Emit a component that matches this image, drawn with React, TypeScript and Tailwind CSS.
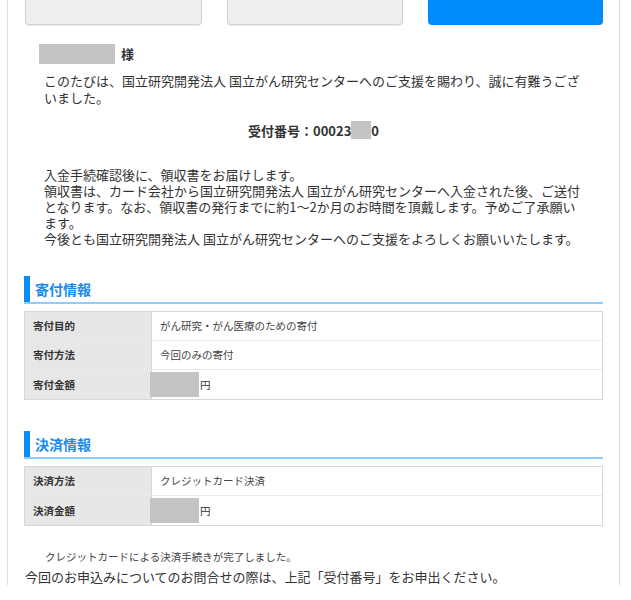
const font = { fontFamily: '"Noto Sans CJK JP", "Noto Sans", sans-serif' };

function StepGap() {
  return (
    <div className="flex w-[25px] justify-center">
      <svg width="6" height="8" viewBox="0 0 6 8" aria-hidden="true">
        <path d="M4 0 L2.5 6" stroke="#c8c8c8" strokeWidth="1.2" fill="none" />
      </svg>
    </div>
  );
}

function SectionHeading({ title }: { title: string }) {
  return (
    <div>
      <div className="flex h-[26px] items-center border-l-[6px] border-[#0a8cf5] pl-[5px]">
        <h2 className="text-[14px] font-bold leading-none text-[#1b8ceb]">{title}</h2>
      </div>
      <div className="h-[2px] bg-[#90cdfb]" />
    </div>
  );
}

function Row({
  label,
  value,
  amount,
  last,
}: {
  label: string;
  value?: string;
  amount?: boolean;
  last?: boolean;
}) {
  return (
    <div className={`flex h-[29px] ${last ? "" : "border-b border-dotted border-[#d4d4d4]"}`}>
      <div className="flex w-[127px] shrink-0 items-center border-r border-[#d8d8d8] bg-[#e7e7e7] pl-[8px] text-[10.5px] font-bold text-[#333]">
        {label}
      </div>
      {amount ? (
        <div className="flex items-center text-[10.5px] text-[#333]">
          <span className="-ml-[2px] h-[25px] w-[49px] bg-[#c4c4c4]" />
          <span className="ml-[1px]">円</span>
        </div>
      ) : (
        <div className="flex items-center pl-[8px] text-[10.5px] text-[#444]">{value}</div>
      )}
    </div>
  );
}

export default function App() {
  return (
    <div className="h-[600px] w-full overflow-hidden bg-white text-[#333]" style={font}>
      <div className="ml-[7px] mr-[11px] min-h-[600px] border-x border-[#dcdcdc] px-[16px]">
        {/* step buttons (clipped at top) */}
        <div className="-mt-[20px] flex pl-[1px]">
          <div className="h-[45px] flex-1 rounded-b-[4px] border border-[#d2d2d2] bg-[#eeeeee] shadow-[0_1px_1px_rgba(0,0,0,0.08)]" />
          <StepGap />
          <div className="h-[45px] flex-1 rounded-b-[4px] border border-[#d2d2d2] bg-[#eeeeee] shadow-[0_1px_1px_rgba(0,0,0,0.08)]" />
          <StepGap />
          <div className="h-[45px] flex-1 rounded-b-[4px] bg-[#008cfa]" />
        </div>

        <div className="mt-[19px] flex items-center pl-[15px]">
          <span className="h-[20px] w-[76px] bg-[#c4c4c4]" />
          <span className="ml-[6px] text-[13px] font-bold">様</span>
        </div>

        <p className="ml-[20px] mt-[8px] w-[540px] text-[13px] leading-[17px]">
          このたびは、国立研究開発法人 国立がん研究センターへのご支援を賜わり、誠に有難うございました。
        </p>

        <p className="mt-[15px] flex items-center justify-center text-[13px] font-bold leading-[17px]">
          受付番号：00023
          <span className="inline-block h-[18px] w-[20px] bg-[#c4c4c4]" />0
        </p>

        <div className="ml-[20px] mt-[28px] w-[540px] text-[13px] leading-[16px]">
          <p>入金手続確認後に、領収書をお届けします。</p>
          <p>
            領収書は、カード会社から国立研究開発法人 国立がん研究センターへ入金された後、ご送付となります。なお、領収書の発行までに約1～2か月のお時間を頂戴します。予めご了承願います。
          </p>
          <p>今後とも国立研究開発法人 国立がん研究センターへのご支援をよろしくお願いいたします。</p>
        </div>

        <section className="mt-[29px]">
          <SectionHeading title="寄付情報" />
          <div className="mt-[7px] border border-[#d8d8d8]">
            <Row label="寄付目的" value="がん研究・がん医療のための寄付" />
            <Row label="寄付方法" value="今回のみの寄付" />
            <Row label="寄付金額" amount last />
          </div>
        </section>

        <section className="mt-[31px]">
          <SectionHeading title="決済情報" />
          <div className="mt-[7px] border border-[#d8d8d8]">
            <Row label="決済方法" value="クレジットカード決済" />
            <Row label="決済金額" amount last />
          </div>
        </section>

        <p className="ml-[21px] mt-[24px] text-[10.5px] leading-[14px] text-[#444]">
          クレジットカードによる決済手続きが完了しました。
        </p>
        <p className="ml-[1px] mt-[4px] text-[13px] leading-[17px]">
          今回のお申込みについてのお問合せの際は、上記「受付番号」をお申出ください。
        </p>
      </div>
    </div>
  );
}
